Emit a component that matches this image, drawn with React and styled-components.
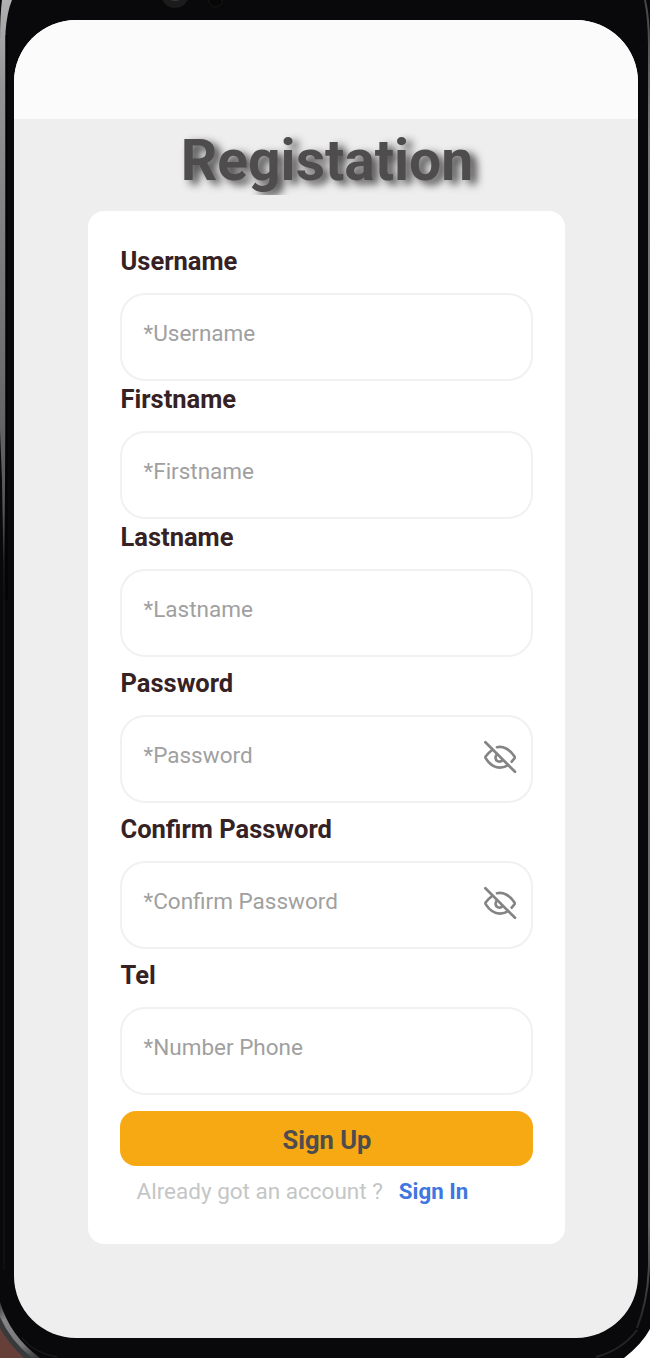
import React from "react";
import styled, { createGlobalStyle } from "styled-components";

const GlobalStyle = createGlobalStyle`
  * { box-sizing: border-box; }
  body { margin: 0; background: #fff; font-family: Roboto, sans-serif; }
`;

const Phone = styled.main`
  position: relative;
  width: 650px;
  height: 1358px;
  padding: 20px 12px 20px 14px;
  overflow: hidden;
`;

const Bezel = styled.svg`
  position: absolute;
  inset: 0;
  display: block;
`;

const Screen = styled.div`
  position: relative;
  display: flex;
  flex-direction: column;
  align-items: center;
  height: 1318px;
  border-radius: 62px;
  background: #eeeeee;
  overflow: hidden;
`;

const StatusArea = styled.div`
  flex: none;
  width: 100%;
  height: 99px;
  background: #fbfbfb;
`;

const Title = styled.h1`
  flex: none;
  width: 100%;
  height: 76px;
  margin: 0;
  padding: 4px 0 0 2px;
  overflow: hidden;
  text-align: center;
  font-size: 57px;
  line-height: 76px;
  font-weight: 700;
  color: #4e4c4d;
  text-shadow: 6px 4px 8px #3c3c3c;
`;

const Card = styled.form`
  flex: none;
  display: flex;
  flex-direction: column;
  width: 477px;
  height: 1033px;
  margin-top: 16px;
  padding: 35px 32px 0;
  border-radius: 16px;
  background: #fff;
`;

const Field = styled.div`
  display: flex;
  flex-direction: column;
  gap: 17px;
  margin-bottom: ${(p) => p.$space}px;
`;

const Label = styled.label`
  height: 30px;
  padding-left: 1px;
  line-height: 30px;
  font-size: 25.5px;
  font-weight: 700;
  color: #362224;
`;

const InputBox = styled.div`
  display: flex;
  align-items: center;
  justify-content: space-between;
  height: 88px;
  padding: 0 14px 0 22px;
  border: 2px solid #f1f1f1;
  border-radius: 25px;
`;

const Placeholder = styled.span`
  padding-bottom: 8px;
  font-size: 22.5px;
  line-height: 30px;
  color: #a0a0a0;
`;

const EyeIcon = styled.svg`
  width: 34px;
  height: 34px;
  margin-top: -4px;
  fill: none;
  stroke: #848484;
  stroke-width: 2.7;
  stroke-linecap: round;
  stroke-linejoin: round;
`;

const SubmitButton = styled.button`
  flex: none;
  height: 55px;
  padding: 2px 0 0 2px;
  border: 0;
  border-radius: 16px;
  background: #f7a914;
  font: 700 25.5px/30px Roboto, sans-serif;
  color: #4e4c4d;
`;

const Footer = styled.div`
  display: flex;
  gap: 16px;
  padding: 10px 0 0 17px;
  font-size: 22.5px;
  line-height: 30px;
  white-space: nowrap;
  color: #c4c6c6;
`;

const SignIn = styled.a`
  font-size: 22.3px;
  font-weight: 700;
  color: #4076df;
`;

const fields = [
  { label: "Username", hint: "*Username", space: 3 },
  { label: "Firstname", hint: "*Firstname", space: 3 },
  { label: "Lastname", hint: "*Lastname", space: 11 },
  { label: "Password", hint: "*Password", space: 11, secret: true },
  { label: "Confirm Password", hint: "*Confirm Password", space: 11, secret: true },
  { label: "Tel", hint: "*Number Phone", space: 16 },
];

function PhoneFrame() {
  return (
    <Bezel width="650" height="1358" viewBox="0 0 650 1358" aria-hidden="true">
      <defs>
        <linearGradient id="edgeLeft" x1="0" y1="0" x2="0" y2="600" gradientUnits="userSpaceOnUse">
          <stop offset="0" stopColor="#b0b0b0" />
          <stop offset="0.15" stopColor="#939393" />
          <stop offset="0.6" stopColor="#6e6e6e" />
          <stop offset="0.85" stopColor="#555" />
          <stop offset="1" stopColor="#151315" />
        </linearGradient>
        <linearGradient id="edgeRight" x1="0" y1="0" x2="0" y2="1358" gradientUnits="userSpaceOnUse">
          <stop offset="0" stopColor="#444" />
          <stop offset="0.1" stopColor="#777" />
          <stop offset="0.9" stopColor="#666" />
          <stop offset="1" stopColor="#111" />
        </linearGradient>
        <linearGradient id="bevel" x1="0" y1="1290" x2="40" y2="1358" gradientUnits="userSpaceOnUse">
          <stop offset="0" stopColor="#08080a" />
          <stop offset="0.35" stopColor="#858588" />
          <stop offset="0.75" stopColor="#77777a" />
          <stop offset="1" stopColor="#333" />
        </linearGradient>
      </defs>
      <rect width="650" height="1358" fill="#09090b" />
      <path d="M2 0H12Q7 12 5.5 32V430L4 595L2 480L0 430V42Q0 15 2 0Z" fill="url(#edgeLeft)" />
      <path d="M6.5 35V600" stroke="#030305" strokeWidth="2" />
      <path d="M4 560V1270" stroke="#1a171a" />
      <path d="M645 0Q649 18 649 45V1265Q648 1300 637 1328" fill="none" stroke="url(#edgeRight)" strokeWidth="2" />
      <path d="M0 1302Q10 1336 40 1358H0Z" fill="url(#bevel)" />
      <path d="M0 1317Q10 1340 32 1358H0Z" fill="#37393a" />
      <path d="M0 1328Q9 1344 24 1358H0Z" fill="#653f38" />
      <path d="M22 1338Q34 1353 57 1357" fill="none" stroke="#202124" />
      <path d="M650 1329Q642 1344 624 1358H650Z" fill="#fff" />
      <path d="M596 1357Q622 1350 637 1330" fill="none" stroke="#242427" strokeWidth="2" />
      <circle cx="175" cy="-6" r="14" fill="#1b1b1b" />
      <ellipse cx="175" cy="-1" rx="5" ry="2" fill="#373737" />
      <circle cx="215.5" cy="0" r="7" fill="#070708" stroke="#171718" />
    </Bezel>
  );
}

function EyeOff() {
  return (
    <EyeIcon viewBox="483 740 34 34" aria-hidden="true">
      <path d="M485.4 742.2L515 771.8" />
      <path d="M491.8 750.2Q488 753.1 485.8 756.2Q485.1 757.3 485.8 758.4C489.2 763.8 494.2 767.6 500 767.6Q504.6 767.6 508.2 765" />
      <path d="M497 747.2C502.9 745.7 509.7 749 514.3 756.2Q515.1 757.4 514.3 758.5L511.7 761.7" />
      <path d="M497.1 754.2C494.8 756.2 495.1 759.8 497.5 761.1C499.2 762 501.2 761.6 502.8 760" />
    </EyeIcon>
  );
}

export default function App() {
  return (
    <>
      <GlobalStyle />
      <Phone>
        <PhoneFrame />
        <Screen>
          <StatusArea />
          <Title>Registation</Title>
          <Card>
            {fields.map((field) => (
              <Field key={field.label} $space={field.space}>
                <Label>{field.label}</Label>
                <InputBox>
                  <Placeholder>{field.hint}</Placeholder>
                  {field.secret && <EyeOff />}
                </InputBox>
              </Field>
            ))}
            <SubmitButton type="button">Sign Up</SubmitButton>
            <Footer>
              <span>Already got an account ?</span>
              <SignIn>Sign In</SignIn>
            </Footer>
          </Card>
        </Screen>
      </Phone>
    </>
  );
}
